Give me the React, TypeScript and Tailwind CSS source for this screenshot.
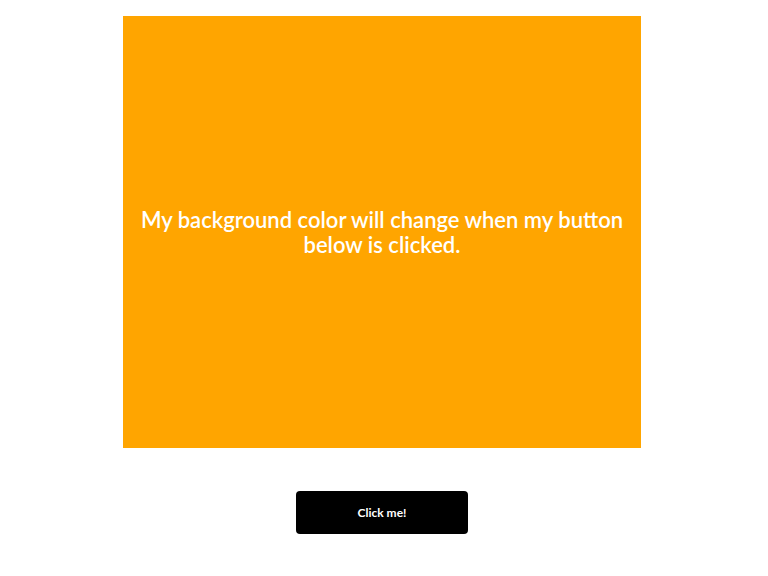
import React, { useState } from "react";

export default function App() {
  const [on, setOn] = useState(false);
  return (
    <div className="w-[764px] min-h-[576px] bg-white flex flex-col items-center pt-4" style={{ fontFamily: '"Lato", "Open Sans", sans-serif' }}>
      <div className={`w-[518px] h-[432px] flex items-center justify-center px-4 text-center ${on ? "bg-[#4b9cd3]" : "bg-[#ffa500]"}`}>
        <p className="text-white text-[22px] leading-[25px] font-semibold">
          My background color will change when my button below is clicked.
        </p>
      </div>
      <button
        onClick={() => setOn(!on)}
        className="mt-[43px] w-[172px] h-[43px] bg-black text-white rounded-[4px] text-[12px] font-bold"
      >
        Click me!
      </button>
    </div>
  );
}
